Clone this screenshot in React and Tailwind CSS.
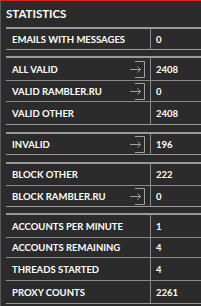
import React from "react";

const Icon = () => (
  <svg width="16" height="18" viewBox="0 0 16 18" className="shrink-0">
    <path d="M5 1.5H14.5V17.5H5" fill="none" stroke="#a0a0a0" strokeWidth="1" />
    <path d="M0 9.5H10.5M7.5 6.5L10.5 9.5L7.5 12.5" fill="none" stroke="#a0a0a0" strokeWidth="1" />
  </svg>
);

const Row = ({ label, value, icon, h, last }) => (
  <div
    className={`flex ${last ? "" : "border-b border-[#8a8a8a]"}`}
    style={{ height: h }}
  >
    <div className="flex w-[144px] items-center justify-between pl-[6px] pr-[4px] pt-[2px]">
      <span>{label}</span>
      {icon && <span className="-mt-[2px] flex"><Icon /></span>}
    </div>
    <div className="flex flex-1 items-center border-l border-[#8a8a8a] pl-[5px] pt-[2px]">
      {value}
    </div>
  </div>
);

const Group = ({ children, mt }) => (
  <div
    className="border-t-2 border-b border-[#999999] ml-[5px]"
    style={{ marginTop: mt }}
  >
    {children}
  </div>
);

export default function App() {
  return (
    <div
      className="w-[201px] h-[306px] bg-[#2b2b2b] border-t border-t-[#e0201a] border-l border-l-[#5a5a5a] overflow-hidden text-white text-[9.5px] font-bold"
      style={{ fontFamily: 'Lato, Roboto, "Noto Sans", sans-serif' }}
    >
      <div className="h-[26px] flex items-center pl-[5px] text-[11.5px] font-bold">
        STATISTICS
      </div>
      <Group mt={0}>
        <Row label="EMAILS WITH MESSAGES" value="0" h={20} last />
      </Group>
      <Group mt={6}>
        <Row label="ALL VALID" value="2408" icon h={23} />
        <Row label="VALID RAMBLER.RU" value="0" icon h={21} />
        <Row label="VALID OTHER" value="2408" h={22} last />
      </Group>
      <Group mt={7}>
        <Row label="INVALID" value="196" icon h={20} last />
      </Group>
      <Group mt={7}>
        <Row label="BLOCK OTHER" value="222" h={22} />
        <Row label="BLOCK RAMBLER.RU" value="0" icon h={20} last />
      </Group>
      <Group mt={6}>
        <Row label="ACCOUNTS PER MINUTE" value="1" h={23} />
        <Row label="ACCOUNTS REMAINING" value="4" h={20} />
        <Row label="THREADS STARTED" value="4" h={23} />
        <Row label="PROXY COUNTS" value="2261" h={22} last />
      </Group>
    </div>
  );
}
